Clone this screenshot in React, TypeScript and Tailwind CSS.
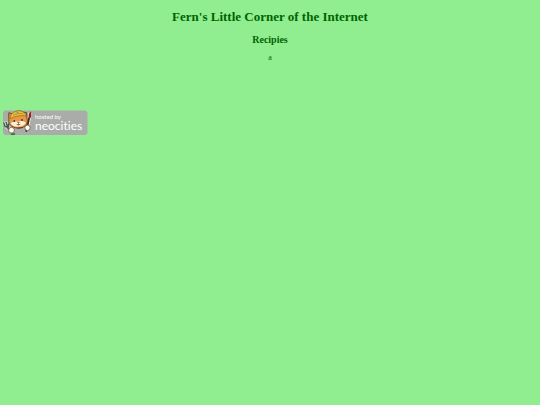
function NeocitiesBadge() {
  return (
    <svg viewBox="0 0 86 26" className="block w-[86px] h-[26px]" role="img" aria-label="Hosted by Neocities">
      <rect x="1" y="0.5" width="84.5" height="24.5" rx="3" fill="#a9aca9" />

      {/* Fork */}
      <g fill="none" strokeLinecap="round" strokeLinejoin="round">
        <path d="M2 13 4 17 7 16.5M4.5 12.5 7 17M4 17 9 21" stroke="#d3dbd3" strokeWidth="2.8" />
        <path d="M1.8 13 3 16.5 6.5 17 6.6 14M4.2 12.5 5.5 16.5M5 17 9 22M9.5 24.2 12.5 24" stroke="#46574e" strokeWidth="1.4" />
      </g>

      {/* Brush */}
      <g strokeLinecap="round">
        <path d="M28 4 25 19" stroke="#f4ead8" strokeWidth="3.6" />
        <path d="M27 8.5 24.3 21" stroke="#4b2a1c" strokeWidth="1.9" />
        <path d="M28.9 1.2C27 2.5 26.3 5 26.7 8L28.5 8.3C29.7 6 29.4 3.5 28.9 1.2Z" fill="#8d2722" />
      </g>

      {/* Cat head */}
      <path
        d="M6.8 9.5 6.8 2.8 10.5 3.8C13 1 18 .3 21.5 2.2L24.5 2.5 25 8.5C26.5 13 23.5 17.5 18 18 11.5 18.5 6 15.5 6.8 9.5Z"
        fill="#e69749"
        stroke="#60411f"
        strokeWidth="0.9"
      />
      <path d="M8.5 13.5C10 12 13 11 15.5 11.8 18.5 10.5 21.5 11 24 12.8 22 17 12.5 18.5 8.5 13.5Z" fill="#fff0d8" />
      <path
        d="M8.3 7C9.5 3 12.5 1.2 16 .8 20 .5 23 2.5 24.3 6.2 20 4.8 13 5.8 8.4 8.8Z"
        fill="#e6c03c"
        stroke="#8c6d20"
        strokeWidth="0.7"
      />
      <path d="M11 5.5C14 3.4 18 3 21.5 4M14 1.8 17 3.2" fill="none" stroke="#a9782a" strokeWidth="0.7" />
      <ellipse cx="12.3" cy="11" rx="0.8" ry="1.1" fill="#3c271a" />
      <ellipse cx="20" cy="10" rx="0.8" ry="1.1" fill="#3c271a" />
      <path d="M15.5 12.4 17.3 12.2 16.6 13.4ZM14.6 14.5Q16.8 16 18.5 14" fill="#8d3d23" stroke="#8d3d23" strokeWidth="0.5" />
      <path d="M15 18.2 21 17.5" stroke="#60411f" strokeWidth="1" />

      {/* Paws */}
      <circle cx="9.5" cy="20.2" r="2.9" fill="#fffdf3" stroke="#6d5737" strokeWidth="0.8" />
      <circle cx="25.5" cy="17.8" r="2.7" fill="#fffdf3" stroke="#6d5737" strokeWidth="0.8" />

      <g fill="#ffffff" className="font-[Lato,sans-serif] [font-variant-ligatures:none]">
        <text x="33" y="9" fontSize="6">
          hosted by
        </text>
        <text x="33" y="20" fontSize="12">
          neocities
        </text>
      </g>
    </svg>
  );
}

export default function App() {
  return (
    <div className="min-h-screen bg-[#90ee90] text-[#006400] font-['Liberation_Serif',serif]">
      <header className="pt-2 text-center font-bold">
        <h1 className="text-[13px] leading-[18px]">Fern's Little Corner of the Internet</h1>
        <h2 className="mt-1.5 text-[10px] leading-4">Recipies</h2>
        <p className="mt-1 text-[8px] leading-3 font-normal">a</p>
      </header>

      <main className="mt-[46px] px-0.5">
        <a href="#neocities" className="inline-block">
          <NeocitiesBadge />
        </a>
      </main>
    </div>
  );
}
